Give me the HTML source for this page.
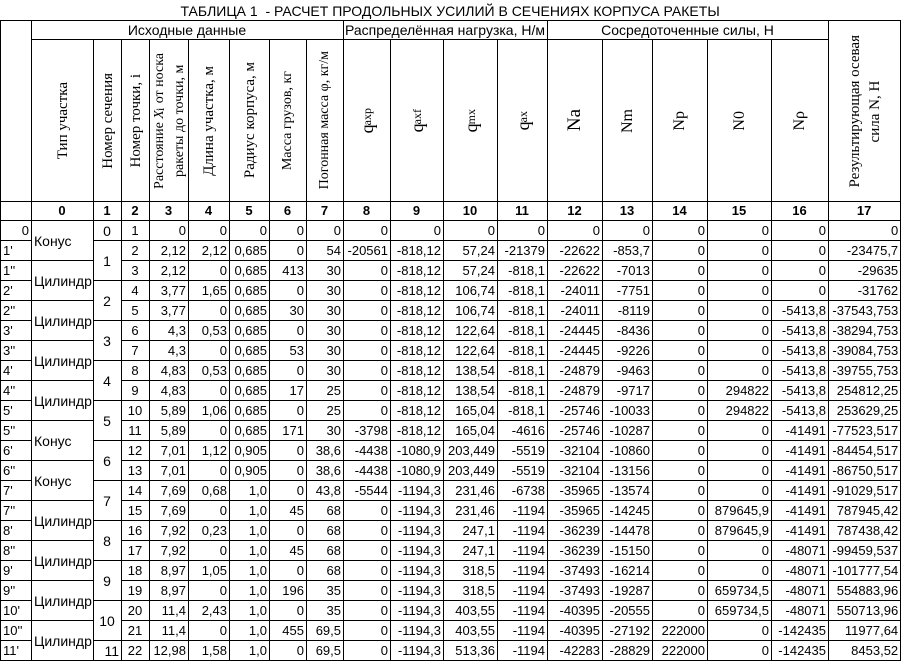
<!DOCTYPE html>
<html><head><meta charset="utf-8">
<style>
html,body{margin:0;padding:0;background:#fff;}
table{border-collapse:collapse;table-layout:fixed;width:900px;font-family:"Liberation Sans",sans-serif;font-size:13px;color:#000;}
td{border:1px solid #000;padding:0 2px 0 1px;text-align:right;white-space:nowrap;overflow:hidden;height:19px;line-height:16px;}
tr.d td{height:19px;}
td.l{text-align:left;padding-left:2px;}
td.c{text-align:center;}
td.t{text-align:left;padding-left:2px;vertical-align:middle;font-size:14px;}
td.s{text-align:center;vertical-align:middle;font-size:14px;}
.title td{border:none;border-bottom:1px solid #000;text-align:center;font-size:14px;height:19px;padding-top:1px;}
.grp td{text-align:center;height:18px;font-size:14px;}
.rot td{height:161px;text-align:center;vertical-align:middle;padding:0;font-family:"Liberation Serif",serif;font-size:15px;}
.rot td div{writing-mode:vertical-rl;transform:rotate(180deg);margin:0 auto;line-height:20px;white-space:nowrap;}
.num td{text-align:center;font-weight:bold;height:18px;}
.q{font-size:18px;}
sub{font-size:12px;vertical-align:baseline;position:relative;top:-1px;}
.big{font-size:19px;}
</style></head><body>
<table>
<colgroup>
<col style="width:31px"><col style="width:62px"><col style="width:28px"><col style="width:28px"><col style="width:39px"><col style="width:41px"><col style="width:40px"><col style="width:37px"><col style="width:37px"><col style="width:47px"><col style="width:53px"><col style="width:54px"><col style="width:50px"><col style="width:55px"><col style="width:50px"><col style="width:55px"><col style="width:64px"><col style="width:57px"><col style="width:72px">
</colgroup>
<tr class="title"><td colspan="19">ТАБЛИЦА 1&nbsp; - РАСЧЕТ ПРОДОЛЬНЫХ УСИЛИЙ В СЕЧЕНИЯХ КОРПУСА РАКЕТЫ</td></tr>
<tr class="grp"><td rowspan="2"></td><td colspan="8">Исходные данные</td><td colspan="4">Распределённая нагрузка, Н/м</td><td colspan="5">Сосредоточенные силы, Н</td><td rowspan="2" style="font-family:'Liberation Serif',serif;font-size:15px;padding:0;vertical-align:middle;"><div style="writing-mode:vertical-rl;transform:rotate(180deg);margin:0 auto;line-height:20px;white-space:nowrap;">Результирующая осевая<br>сила N, Н</div></td></tr>
<tr class="rot">
<td><div>Тип участка</div></td>
<td><div>Номер сечения</div></td>
<td><div>Номер точки, i</div></td>
<td><div style="font-size:14px;line-height:19px;">Расстояние <i>X</i><sub>i</sub> от носка<br>ракеты до точки, м</div></td>
<td><div>Длина участка, м</div></td>
<td><div>Радиус корпуса, м</div></td>
<td><div style="font-size:14px">Масса грузов, кг</div></td>
<td><div style="font-size:14px">Погонная масса φ, кг/м</div></td>
<td><div class="q">q<sub>axp</sub></div></td>
<td><div class="q">q<sub>axf</sub></div></td>
<td><div class="q">q<sub>mx</sub></div></td>
<td><div class="q">q<sub>ax</sub></div></td>
<td><div class="big">Na</div></td>
<td><div style="font-size:16px">Nm</div></td>
<td><div style="font-size:16px">Np</div></td>
<td><div style="font-size:16px">N0</div></td>
<td><div style="font-size:16px">Nρ</div></td>
</tr>
<tr class="num"><td></td><td>0</td><td>1</td><td>2</td><td>3</td><td>4</td><td>5</td><td>6</td><td>7</td><td>8</td><td>9</td><td>10</td><td>11</td><td>12</td><td>13</td><td>14</td><td>15</td><td>16</td><td>17</td></tr>

<tr class="d"><td>0</td><td class="t" rowspan="2">Конус</td><td class="s">0</td><td class="c">1</td><td>0</td><td>0</td><td>0</td><td>0</td><td>0</td><td>0</td><td>0</td><td>0</td><td>0</td><td>0</td><td>0</td><td>0</td><td>0</td><td>0</td><td>0</td></tr>
<tr class="d"><td class="l">1'</td><td class="s" rowspan="2">1</td><td class="c">2</td><td>2,12</td><td>2,12</td><td>0,685</td><td>0</td><td>54</td><td>-20561</td><td>-818,12</td><td>57,24</td><td>-21379</td><td>-22622</td><td>-853,7</td><td>0</td><td>0</td><td>0</td><td>-23475,7</td></tr>
<tr class="d"><td class="l">1''</td><td class="t" rowspan="2">Цилиндр</td><td class="c">3</td><td>2,12</td><td>0</td><td>0,685</td><td>413</td><td>30</td><td>0</td><td>-818,12</td><td>57,24</td><td>-818,1</td><td>-22622</td><td>-7013</td><td>0</td><td>0</td><td>0</td><td>-29635</td></tr>
<tr class="d"><td class="l">2'</td><td class="s" rowspan="2">2</td><td class="c">4</td><td>3,77</td><td>1,65</td><td>0,685</td><td>0</td><td>30</td><td>0</td><td>-818,12</td><td>106,74</td><td>-818,1</td><td>-24011</td><td>-7751</td><td>0</td><td>0</td><td>0</td><td>-31762</td></tr>
<tr class="d"><td class="l">2''</td><td class="t" rowspan="2">Цилиндр</td><td class="c">5</td><td>3,77</td><td>0</td><td>0,685</td><td>30</td><td>30</td><td>0</td><td>-818,12</td><td>106,74</td><td>-818,1</td><td>-24011</td><td>-8119</td><td>0</td><td>0</td><td>-5413,8</td><td>-37543,753</td></tr>
<tr class="d"><td class="l">3'</td><td class="s" rowspan="2">3</td><td class="c">6</td><td>4,3</td><td>0,53</td><td>0,685</td><td>0</td><td>30</td><td>0</td><td>-818,12</td><td>122,64</td><td>-818,1</td><td>-24445</td><td>-8436</td><td>0</td><td>0</td><td>-5413,8</td><td>-38294,753</td></tr>
<tr class="d"><td class="l">3''</td><td class="t" rowspan="2">Цилиндр</td><td class="c">7</td><td>4,3</td><td>0</td><td>0,685</td><td>53</td><td>30</td><td>0</td><td>-818,12</td><td>122,64</td><td>-818,1</td><td>-24445</td><td>-9226</td><td>0</td><td>0</td><td>-5413,8</td><td>-39084,753</td></tr>
<tr class="d"><td class="l">4'</td><td class="s" rowspan="2">4</td><td class="c">8</td><td>4,83</td><td>0,53</td><td>0,685</td><td>0</td><td>30</td><td>0</td><td>-818,12</td><td>138,54</td><td>-818,1</td><td>-24879</td><td>-9463</td><td>0</td><td>0</td><td>-5413,8</td><td>-39755,753</td></tr>
<tr class="d"><td class="l">4''</td><td class="t" rowspan="2">Цилиндр</td><td class="c">9</td><td>4,83</td><td>0</td><td>0,685</td><td>17</td><td>25</td><td>0</td><td>-818,12</td><td>138,54</td><td>-818,1</td><td>-24879</td><td>-9717</td><td>0</td><td>294822</td><td>-5413,8</td><td>254812,25</td></tr>
<tr class="d"><td class="l">5'</td><td class="s" rowspan="2">5</td><td class="c">10</td><td>5,89</td><td>1,06</td><td>0,685</td><td>0</td><td>25</td><td>0</td><td>-818,12</td><td>165,04</td><td>-818,1</td><td>-25746</td><td>-10033</td><td>0</td><td>294822</td><td>-5413,8</td><td>253629,25</td></tr>
<tr class="d"><td class="l">5''</td><td class="t" rowspan="2">Конус</td><td class="c">11</td><td>5,89</td><td>0</td><td>0,685</td><td>171</td><td>30</td><td>-3798</td><td>-818,12</td><td>165,04</td><td>-4616</td><td>-25746</td><td>-10287</td><td>0</td><td>0</td><td>-41491</td><td>-77523,517</td></tr>
<tr class="d"><td class="l">6'</td><td class="s" rowspan="2">6</td><td class="c">12</td><td>7,01</td><td>1,12</td><td>0,905</td><td>0</td><td>38,6</td><td>-4438</td><td>-1080,9</td><td>203,449</td><td>-5519</td><td>-32104</td><td>-10860</td><td>0</td><td>0</td><td>-41491</td><td>-84454,517</td></tr>
<tr class="d"><td class="l">6''</td><td class="t" rowspan="2">Конус</td><td class="c">13</td><td>7,01</td><td>0</td><td>0,905</td><td>0</td><td>38,6</td><td>-4438</td><td>-1080,9</td><td>203,449</td><td>-5519</td><td>-32104</td><td>-13156</td><td>0</td><td>0</td><td>-41491</td><td>-86750,517</td></tr>
<tr class="d"><td class="l">7'</td><td class="s" rowspan="2">7</td><td class="c">14</td><td>7,69</td><td>0,68</td><td>1,0</td><td>0</td><td>43,8</td><td>-5544</td><td>-1194,3</td><td>231,46</td><td>-6738</td><td>-35965</td><td>-13574</td><td>0</td><td>0</td><td>-41491</td><td>-91029,517</td></tr>
<tr class="d"><td class="l">7''</td><td class="t" rowspan="2">Цилиндр</td><td class="c">15</td><td>7,69</td><td>0</td><td>1,0</td><td>45</td><td>68</td><td>0</td><td>-1194,3</td><td>231,46</td><td>-1194</td><td>-35965</td><td>-14245</td><td>0</td><td>879645,9</td><td>-41491</td><td>787945,42</td></tr>
<tr class="d"><td class="l">8'</td><td class="s" rowspan="2">8</td><td class="c">16</td><td>7,92</td><td>0,23</td><td>1,0</td><td>0</td><td>68</td><td>0</td><td>-1194,3</td><td>247,1</td><td>-1194</td><td>-36239</td><td>-14478</td><td>0</td><td>879645,9</td><td>-41491</td><td>787438,42</td></tr>
<tr class="d"><td class="l">8''</td><td class="t" rowspan="2">Цилиндр</td><td class="c">17</td><td>7,92</td><td>0</td><td>1,0</td><td>45</td><td>68</td><td>0</td><td>-1194,3</td><td>247,1</td><td>-1194</td><td>-36239</td><td>-15150</td><td>0</td><td>0</td><td>-48071</td><td>-99459,537</td></tr>
<tr class="d"><td class="l">9'</td><td class="s" rowspan="2">9</td><td class="c">18</td><td>8,97</td><td>1,05</td><td>1,0</td><td>0</td><td>68</td><td>0</td><td>-1194,3</td><td>318,5</td><td>-1194</td><td>-37493</td><td>-16214</td><td>0</td><td>0</td><td>-48071</td><td>-101777,54</td></tr>
<tr class="d"><td class="l">9''</td><td class="t" rowspan="2">Цилиндр</td><td class="c">19</td><td>8,97</td><td>0</td><td>1,0</td><td>196</td><td>35</td><td>0</td><td>-1194,3</td><td>318,5</td><td>-1194</td><td>-37493</td><td>-19287</td><td>0</td><td>659734,5</td><td>-48071</td><td>554883,96</td></tr>
<tr class="d"><td class="l">10'</td><td class="s" rowspan="2">10</td><td class="c">20</td><td>11,4</td><td>2,43</td><td>1,0</td><td>0</td><td>35</td><td>0</td><td>-1194,3</td><td>403,55</td><td>-1194</td><td>-40395</td><td>-20555</td><td>0</td><td>659734,5</td><td>-48071</td><td>550713,96</td></tr>
<tr class="d"><td class="l">10''</td><td class="t" rowspan="2">Цилиндр</td><td class="c">21</td><td>11,4</td><td>0</td><td>1,0</td><td>455</td><td>69,5</td><td>0</td><td>-1194,3</td><td>403,55</td><td>-1194</td><td>-40395</td><td>-27192</td><td>222000</td><td>0</td><td>-142435</td><td>11977,64</td></tr>
<tr class="d"><td class="l">11'</td><td style="font-size:14px">11</td><td class="c">22</td><td>12,98</td><td>1,58</td><td>1,0</td><td>0</td><td>69,5</td><td>0</td><td>-1194,3</td><td>513,36</td><td>-1194</td><td>-42283</td><td>-28829</td><td>222000</td><td>0</td><td>-142435</td><td>8453,52</td></tr>
</table>
</body></html>
